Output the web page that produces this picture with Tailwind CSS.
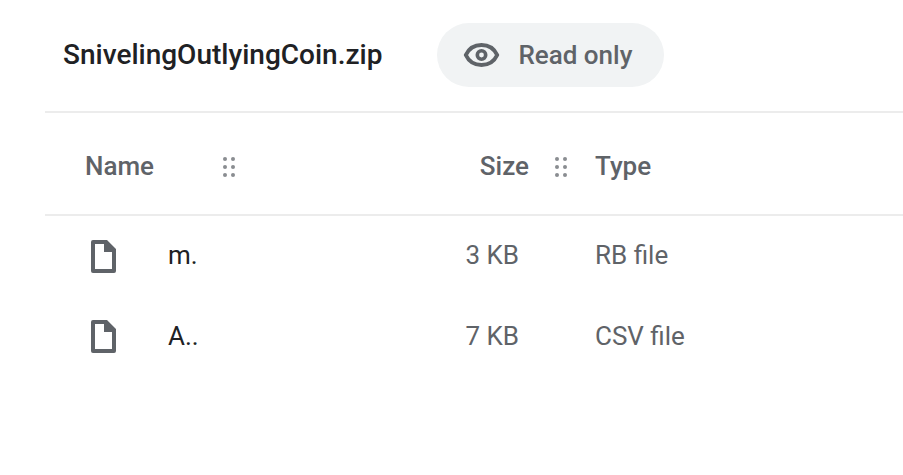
<!DOCTYPE html>
<html lang="en">
<head>
    <meta charset="UTF-8">
    <meta name="viewport" content="width=device-width, initial-scale=1.0">
    <title>SnivelingOutlyingCoin.zip</title>
    <script src="https://cdn.jsdelivr.net/npm/@tailwindcss/browser@4"></script>
</head>
<body class="bg-white font-[Roboto,sans-serif] text-[26px] leading-8 text-[#5f6368] min-h-screen pl-[45px]">

    <header class="flex items-center h-[111px] pl-[18px] pb-0.5 gap-[55px]">
        <h1 class="text-[28px] font-medium text-[#202124]">SnivelingOutlyingCoin.zip</h1>
        <div class="flex items-center h-16 rounded-full bg-[#f1f3f4] pl-[26px] pr-8 gap-[18px]">
            <svg class="w-[37px] h-[26px]" viewBox="0 0 37 26" fill="none" stroke="currentColor" aria-hidden="true">
                <path stroke-width="4" stroke-linejoin="round" d="M2.8 13C5.8 6.6 11.6 3 18.5 3s12.7 3.6 15.7 10C31.2 19.4 25.4 23 18.500 23S5.800 19.400 2.800 13Z" />
                <circle cx="18.5" cy="13" r="4.2" stroke-width="3.6" />
            </svg>
            <span class="font-medium">Read only</span>
        </div>
    </header>

    <table class="w-full table-fixed border-collapse text-left">
        <thead>
            <tr class="h-[103px] border-y-2 border-[#ececec]">
                <th scope="col" class="w-[200px] pl-10 pt-1 font-medium">
                    <div class="flex items-center justify-between pr-2">
                        Name
                        <svg class="w-4 h-6 text-[#8a8d91]" viewBox="0 0 16 24" fill="currentColor" aria-hidden="true">
                            <circle cx="4" cy="5" r="2" /><circle cx="12" cy="5" r="2" />
                            <circle cx="4" cy="13" r="2" /><circle cx="12" cy="13" r="2" />
                            <circle cx="4" cy="21" r="2" /><circle cx="12" cy="21" r="2" />
                        </svg>
                    </div>
                </th>
                <th scope="col" class="w-[332px] pt-1 font-medium">
                    <div class="flex items-center justify-end gap-6 pr-2">
                        Size
                        <svg class="w-4 h-6 text-[#8a8d91]" viewBox="0 0 16 24" fill="currentColor" aria-hidden="true">
                            <circle cx="4" cy="5" r="2" /><circle cx="12" cy="5" r="2" />
                            <circle cx="4" cy="13" r="2" /><circle cx="12" cy="13" r="2" />
                            <circle cx="4" cy="21" r="2" /><circle cx="12" cy="21" r="2" />
                        </svg>
                    </div>
                </th>
                <th scope="col" class="pl-[18px] pt-1 font-medium">Type</th>
            </tr>
        </thead>
        <tbody>
            <tr class="h-[81px]">
                <td class="pl-[46px]">
                    <div class="flex items-center gap-[52px]">
                        <svg class="w-[25px] h-[33px]" viewBox="0 0 25 33" fill="currentColor" aria-hidden="true">
                            <path fill-rule="evenodd" d="M2 0h14l9 9v22a2 2 0 0 1-2 2H2a2 2 0 0 1-2-2V2a2 2 0 0 1 2-2ZM4 4v25h17V12h-8V4Z" />
                        </svg>
                        <span class="pb-0.5 text-[#202124]">m.</span>
                    </div>
                </td>
                <td class="pr-[58px] pb-0.5 text-right">3 KB</td>
                <td class="pl-[18px] pb-0.5">RB file</td>
            </tr>
            <tr class="h-[81px]">
                <td class="pl-[46px]">
                    <div class="flex items-center gap-[52px]">
                        <svg class="w-[25px] h-[33px]" viewBox="0 0 25 33" fill="currentColor" aria-hidden="true">
                            <path fill-rule="evenodd" d="M2 0h14l9 9v22a2 2 0 0 1-2 2H2a2 2 0 0 1-2-2V2a2 2 0 0 1 2-2ZM4 4v25h17V12h-8V4Z" />
                        </svg>
                        <span class="pb-0.5 text-[#202124]">A..</span>
                    </div>
                </td>
                <td class="pr-[58px] pb-0.5 text-right">7 KB</td>
                <td class="pl-[18px] pb-0.5">CSV file</td>
            </tr>
        </tbody>
    </table>

</body>
</html>
